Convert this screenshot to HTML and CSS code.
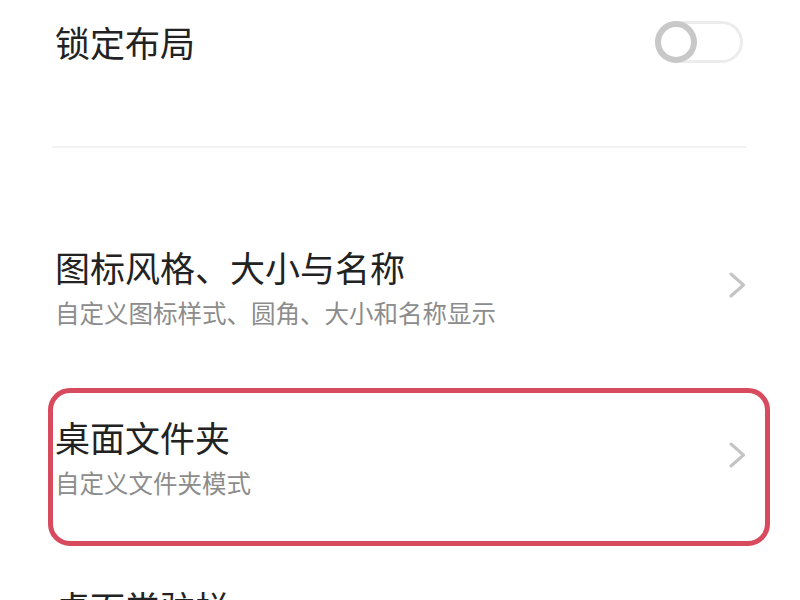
FILE: index.html
```html
<!DOCTYPE html>
<html lang="zh-CN">
<head>
<meta charset="utf-8">
<title>桌面设置</title>
<link rel="stylesheet" href="styles.css">
</head>
<body>
<main class="page">
  <div class="row switch-row">
    <span class="title">锁定布局</span>
    <span class="toggle"><span class="knob"></span></span>
  </div>
  <div class="divider"></div>
  <div class="item">
    <div class="texts">
      <div class="title">图标风格、大小与名称</div>
      <div class="sub">自定义图标样式、圆角、大小和名称显示</div>
    </div>
    <svg class="chev" width="18" height="26" viewBox="0 0 18 26"><polyline points="3,2 15.5,13 3,24" fill="none" stroke="#c4c4c4" stroke-width="3" stroke-linecap="round" stroke-linejoin="round"/></svg>
  </div>
  <div class="item highlight">
    <div class="texts">
      <div class="title">桌面文件夹</div>
      <div class="sub">自定义文件夹模式</div>
    </div>
    <svg class="chev" width="18" height="26" viewBox="0 0 18 26"><polyline points="3,2 15.5,13 3,24" fill="none" stroke="#c4c4c4" stroke-width="3" stroke-linecap="round" stroke-linejoin="round"/></svg>
  </div>
  <div class="item">
    <div class="texts">
      <div class="title">桌面常驻栏</div>
    </div>
  </div>
</main>
</body>
</html>
```
FILE: styles.css
```css
html, body {
  margin: 0;
  padding: 0;
  background: #ffffff;
  overflow: hidden;
}
body {
  font-family: "Noto Sans CJK SC", "Noto Sans", sans-serif;
  color: #222222;
}
.page {
  padding: 0 54px 0 55px;
  height: 600px;
  box-sizing: border-box;
  overflow: hidden;
}
.row {
  display: flex;
  align-items: center;
  justify-content: space-between;
}
.switch-row {
  height: 84px;
}
.title {
  font-size: 35px;
  line-height: 44px;
  color: #222222;
}
.sub {
  font-size: 24.5px;
  line-height: 36px;
  color: #8c8c8c;
  margin-top: 6px;
}
.toggle {
  width: 88px;
  height: 42px;
  box-sizing: border-box;
  border: 3px solid #ececec;
  border-radius: 21px;
  margin-right: 3px;
  position: relative;
  display: block;
}
.knob {
  position: absolute;
  left: -3px;
  top: -3px;
  width: 42px;
  height: 42px;
  box-sizing: border-box;
  border: 6px solid #c8c8c8;
  border-radius: 50%;
  background: #fff;
}
.divider {
  height: 2px;
  background: #f3f3f3;
  margin: 62px -1px 55px -3px;
}
.item {
  display: flex;
  align-items: center;
  justify-content: space-between;
  padding: 42px 0;
  height: 86px;
}
.item:last-child {
  align-items: flex-start;
}
.highlight {
  position: relative;
}
.highlight::after {
  content: "";
  position: absolute;
  left: -7px;
  right: -24px;
  top: 15px;
  bottom: -3px;
  border: 5px solid #d84a5e;
  border-radius: 22px;
}
.chev {
  display: block;
  margin-top: -6px;
}
```
